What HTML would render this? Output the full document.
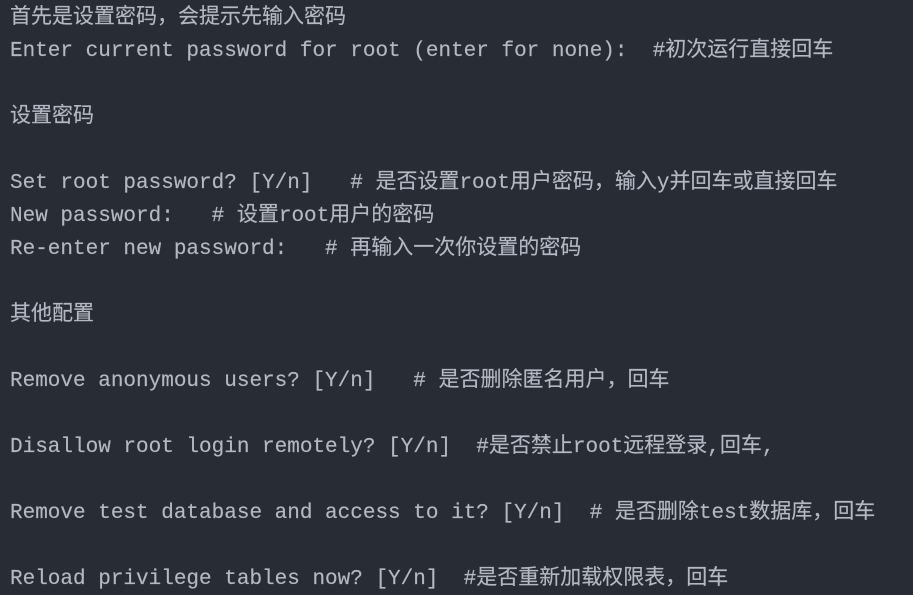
<!DOCTYPE html>
<html><head><meta charset="utf-8"><style>
html,body{margin:0;padding:0;background:#282c34;width:913px;height:595px;overflow:hidden}
pre{margin:0;padding:2px 0 0 10px;font-family:"Liberation Mono","Noto Sans CJK SC",monospace;font-size:21px;letter-spacing:0;line-height:33px;color:#b3b9c4;white-space:pre;-webkit-text-stroke:0.15px #b3b9c4}
</style></head><body><pre>首先是设置密码，会提示先输入密码
Enter current password for root (enter for none):  #初次运行直接回车

设置密码

Set root password? [Y/n]   # 是否设置root用户密码，输入y并回车或直接回车
New password:   # 设置root用户的密码
Re-enter new password:   # 再输入一次你设置的密码

其他配置

Remove anonymous users? [Y/n]   # 是否删除匿名用户，回车

Disallow root login remotely? [Y/n]  #是否禁止root远程登录,回车,

Remove test database and access to it? [Y/n]  # 是否删除test数据库，回车

Reload privilege tables now? [Y/n]  #是否重新加载权限表，回车</pre></body></html>
